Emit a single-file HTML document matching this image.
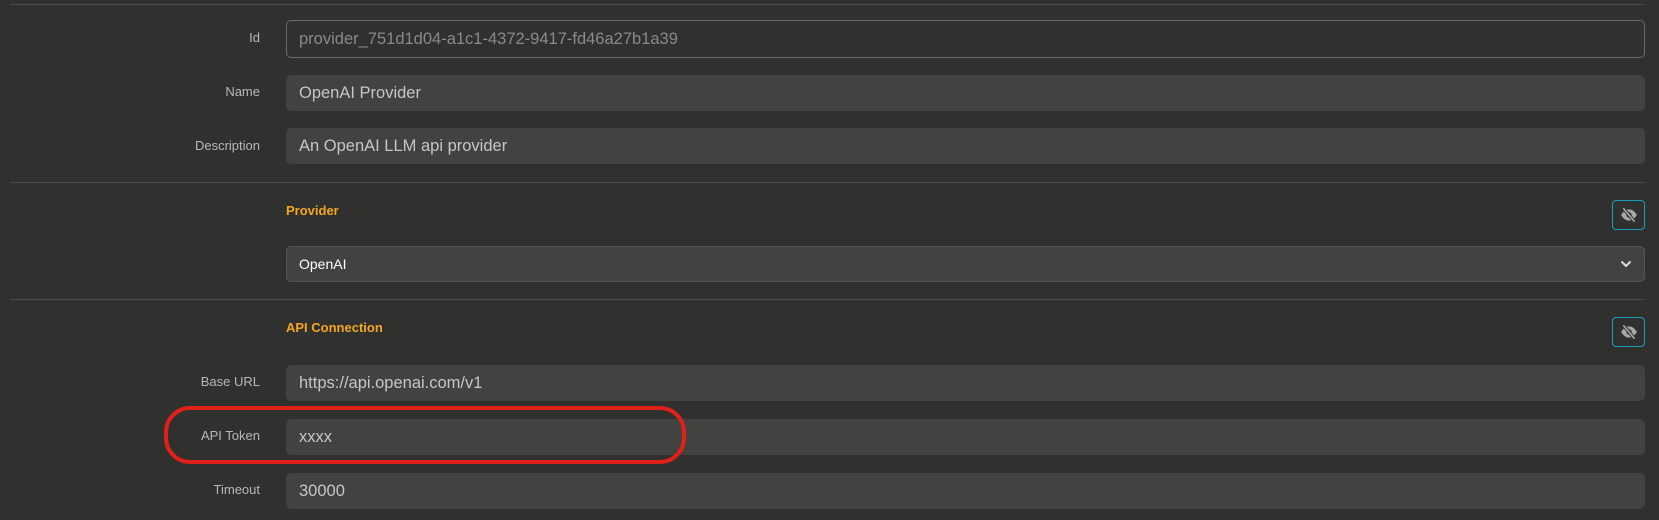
<!DOCTYPE html>
<html><head><style>
body{margin:0;width:1659px;height:520px;background:#30302e;font-family:"Liberation Sans",sans-serif;position:relative;overflow:hidden}
.hr{position:absolute;left:10px;right:14px;height:1px;background:#4a4a48}
.lbl{position:absolute;width:260px;left:0;text-align:right;color:#b8b8b8;font-size:13px}
.in{position:absolute;left:286px;width:1359px;height:36px;background:#424240;border-radius:5px;color:#c6c6c6;font-size:16.5px;line-height:36px;padding-left:13px;box-sizing:border-box}
.h{position:absolute;left:286px;color:#f5a623;font-weight:bold;font-size:13px}
.eye{position:absolute;left:1612px;width:33px;height:30px;border:1.5px solid #1b9cb8;border-radius:4px;box-sizing:border-box}
.eye svg{position:absolute;left:7px;top:5px}
</style></head><body>
<div class="hr" style="top:4px"></div>
<div class="lbl" style="top:30px">Id</div>
<div class="in" style="top:20px;height:38px;background:transparent;border:1px solid #6a6a68;color:#8a8a8a;line-height:36px;padding-left:12px">provider_751d1d04-a1c1-4372-9417-fd46a27b1a39</div>
<div class="lbl" style="top:84px">Name</div>
<div class="in" style="top:75px">OpenAI Provider</div>
<div class="lbl" style="top:138px">Description</div>
<div class="in" style="top:128px">An OpenAI LLM api provider</div>
<div class="hr" style="top:182px"></div>
<div class="h" style="top:203px">Provider</div>
<div class="eye" style="top:200px"><svg width="18" height="18" viewBox="0 0 16 16"><path d="M1 8c2-3.5 4.5-5 7-5s5 1.5 7 5c-2 3.5-4.5 5-7 5s-5-1.5-7-5z" fill="#a8a8a8"/><circle cx="8" cy="8" r="2.4" fill="#30302e"/><path d="M3 2l10 12" stroke="#30302e" stroke-width="3"/><path d="M3 2l10 12" stroke="#a8a8a8" stroke-width="1.5"/></svg></div>
<div class="in" style="top:246px;border:1px solid #555;color:#fff;font-size:14px;line-height:34px;padding-left:12px">OpenAI<svg style="position:absolute;right:12px;top:13px" width="12" height="8" viewBox="0 0 12 8"><path d="M1.5 1.5l4.5 4.5 4.5-4.5" stroke="#ddd" stroke-width="2" fill="none"/></svg></div>
<div class="hr" style="top:299px"></div>
<div class="h" style="top:320px">API Connection</div>
<div class="eye" style="top:317px"><svg width="18" height="18" viewBox="0 0 16 16"><path d="M1 8c2-3.5 4.5-5 7-5s5 1.5 7 5c-2 3.5-4.5 5-7 5s-5-1.5-7-5z" fill="#a8a8a8"/><circle cx="8" cy="8" r="2.4" fill="#30302e"/><path d="M3 2l10 12" stroke="#30302e" stroke-width="3"/><path d="M3 2l10 12" stroke="#a8a8a8" stroke-width="1.5"/></svg></div>
<div class="lbl" style="top:374px">Base URL</div>
<div class="in" style="top:365px">https://api.openai.com/v1</div>
<div class="lbl" style="top:428px">API Token</div>
<div class="in" style="top:419px">xxxx</div>
<div class="lbl" style="top:482px">Timeout</div>
<div class="in" style="top:473px">30000</div>
<div style="position:absolute;left:164px;top:406px;width:522px;height:58px;border:4px solid #e0201a;border-radius:26px;box-sizing:border-box"></div>
</body></html>
